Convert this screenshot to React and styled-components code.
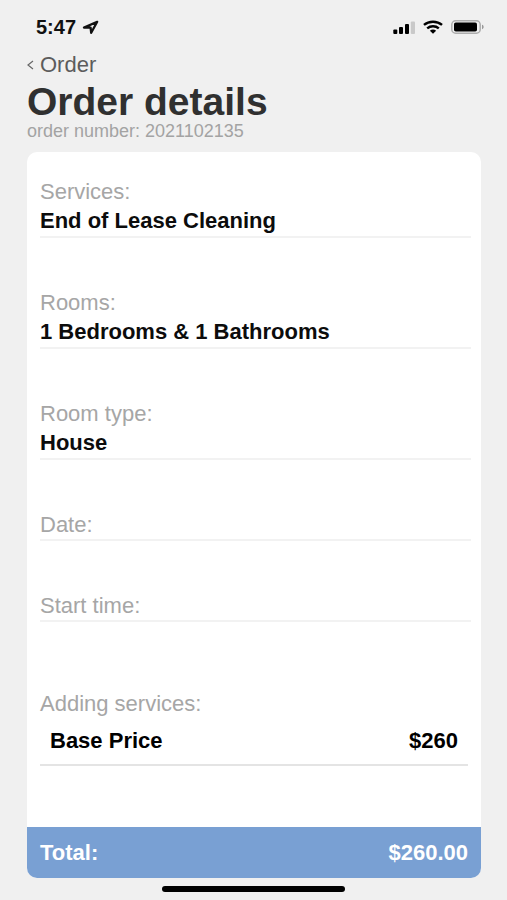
import React from "react";
import styled, { createGlobalStyle } from "styled-components";

const GlobalStyle = createGlobalStyle`
  * {
    box-sizing: border-box;
  }
  body {
    margin: 0;
    background-color: #f0f0f0;
    font-family: "Liberation Sans", Arial, sans-serif;
  }
`

const Screen = styled.div`
  min-height: 100vh;
  display: flex;
  flex-direction: column;
  background-color: #f0f0f0;
`

const StatusBar = styled.div`
  display: flex;
  justify-content: space-between;
  align-items: center;
  height: 54px;
  padding: 0 23px 0 36px;
`

const Clock = styled.div`
  display: flex;
  align-items: center;
  gap: 6px;
  color: #111;
  font-size: 20px;
  font-weight: bold;
`

const StatusIcons = styled.div`
  display: flex;
  align-items: center;
  gap: 8px;
`

const Header = styled.header`
  display: flex;
  flex-direction: column;
  align-items: flex-start;
  padding: 0 27px;
`

const BackLink = styled.a`
  display: flex;
  align-items: center;
  gap: 6px;
  color: #5c5c5c;
  font-size: 22px;
  line-height: 22px;
  text-decoration: none;
`

const Title = styled.h1`
  margin: 6px 0 0;
  color: #303030;
  font-size: 39px;
  line-height: 40px;
`

const OrderNumber = styled.p`
  margin: 0;
  color: #a3a3a3;
  font-size: 18px;
  line-height: 18px;
`

const Card = styled.main`
  flex: 1;
  display: flex;
  flex-direction: column;
  margin: 12px 26px 0 27px;
  border-radius: 10px;
  background-color: white;
  overflow: hidden;
`

const Fields = styled.dl`
  display: flex;
  flex-direction: column;
  gap: 51px;
  margin: 0;
  padding: 26px 10px 0 13px;
`

const Field = styled.div`
  border-bottom: 2px solid #f2f2f2;
`

const Label = styled.dt`
  color: #a6a6a6;
  font-size: 22px;
  line-height: 28px;
`

const Value = styled.dd`
  margin: 0;
  color: #0c0c0c;
  font-size: 22px;
  font-weight: bold;
  line-height: 30px;
`

const Adding = styled.dl`
  flex: 1;
  margin: 0;
  padding: 68px 13px 24px;
`

const PriceRow = styled.dd`
  display: flex;
  justify-content: space-between;
  margin: 0;
  padding: 8px 10px;
  border-bottom: 2px solid #e4e4e4;
  color: #000;
  font-size: 22px;
  font-weight: bold;
  line-height: 30px;
`

const Total = styled.footer`
  display: flex;
  justify-content: space-between;
  align-items: center;
  height: 51px;
  padding: 0 13px;
  background-color: #79a0d3;
  color: white;
  font-size: 22px;
  font-weight: bold;
`

const HomeIndicator = styled.div`
  width: 36%;
  height: 6px;
  margin: 8px auto;
  border-radius: 3px;
  background-color: #000;
`

const LocationIcon = () => (
  <svg width="17" height="15" viewBox="0 0 17 15" aria-hidden="true">
    <path d="M15.2 1.8 2 7.6h6.6l.6 5.2z" fill="none" stroke="#111" strokeWidth="2.3" strokeLinejoin="round" />
  </svg>
)

const SignalIcon = () => (
  <svg width="22" height="13" viewBox="0 0 22 13" aria-hidden="true">
    <rect x="0.3" y="8.5" width="4" height="4.5" rx="1" />
    <rect x="6" y="6" width="4" height="7" rx="1" />
    <rect x="12" y="3" width="4" height="10" rx="1" />
    <rect x="17.8" y="0.5" width="4.2" height="12.5" rx="1" fill="#c9c9c9" />
  </svg>
)

const WifiIcon = () => (
  <svg width="20" height="14" viewBox="0 0 21 14" aria-hidden="true">
    <g fill="none" stroke="#000" strokeWidth="2.5">
      <path d="M1 4.8C6.2.3 14.8.3 20 4.8" />
      <path d="M4.4 8.4c3.5-3 8.7-3 12.2 0" />
    </g>
    <path d="M7.2 10.9c1.9-1.6 4.7-1.6 6.6 0L10.5 14z" />
  </svg>
)

const BatteryIcon = () => (
  <svg width="33" height="14" viewBox="0 0 33 14" aria-hidden="true">
    <rect x="0.8" y="0.8" width="28.4" height="12.4" rx="3.8" fill="none" stroke="#adadad" strokeWidth="1.5" />
    <rect x="3" y="2.5" width="23" height="9" rx="1.8" />
    <path d="M31 4.8c2.2.6 2.2 3.8 0 4.4z" fill="#999" />
  </svg>
)

const ChevronIcon = () => (
  <svg width="7" height="10" viewBox="0 0 7 10" aria-hidden="true">
    <path d="M6 1 1 5l5 4" fill="none" stroke="#666" strokeWidth="1.2" />
  </svg>
)

const fields = [
  { label: "Services:", value: "End of Lease Cleaning" },
  { label: "Rooms:", value: "1 Bedrooms & 1 Bathrooms" },
  { label: "Room type:", value: "House" },
  { label: "Date:" },
  { label: "Start time:" },
]

export default function App() {
  return (
    <Screen>
      <GlobalStyle />
      <StatusBar>
        <Clock>5:47 <LocationIcon /></Clock>
        <StatusIcons>
          <SignalIcon />
          <WifiIcon />
          <BatteryIcon />
        </StatusIcons>
      </StatusBar>
      <Header>
        <BackLink href="#order"><ChevronIcon />Order</BackLink>
        <Title>Order details</Title>
        <OrderNumber>order number: 2021102135</OrderNumber>
      </Header>
      <Card>
        <Fields>
          {fields.map(({ label, value }) => (
            <Field key={label}>
              <Label>{label}</Label>
              {value && <Value>{value}</Value>}
            </Field>
          ))}
        </Fields>
        <Adding>
          <Label>Adding services:</Label>
          <PriceRow>
            <span>Base Price</span>
            <span>$260</span>
          </PriceRow>
        </Adding>
        <Total>
          <span>Total:</span>
          <span>$260.00</span>
        </Total>
      </Card>
      <HomeIndicator />
    </Screen>
  )
}
